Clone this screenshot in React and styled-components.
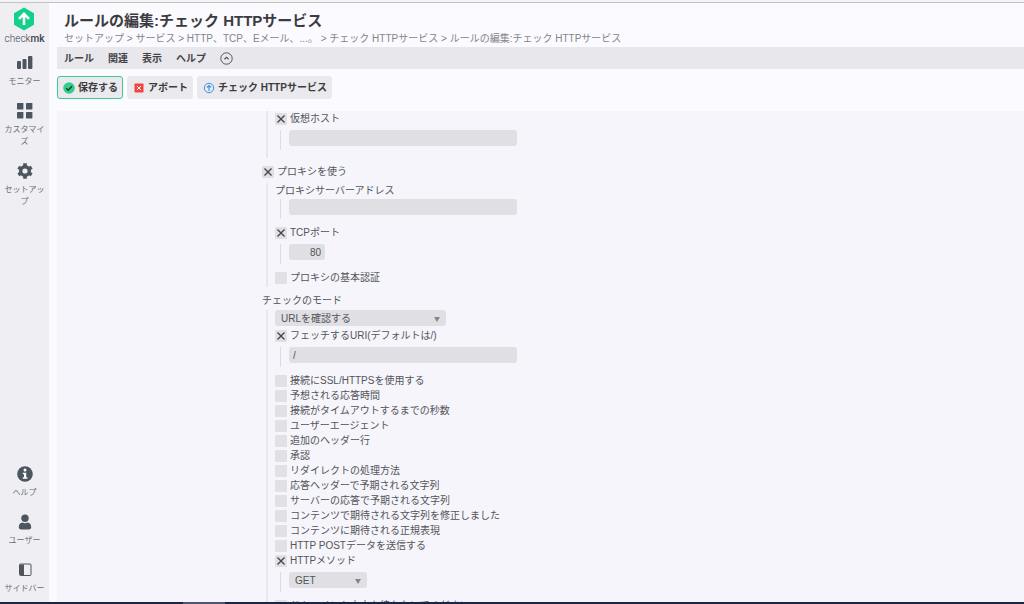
import React from "react";
import styled, { createGlobalStyle } from "styled-components";

const GlobalStyle = createGlobalStyle`
  *, *::before, *::after { box-sizing: border-box; }
  body {
    margin: 0;
    background: #fafaff;
    color: #545458;
    font: 10px/15px "Liberation Sans", "Noto Sans CJK JP", sans-serif;
  }
  button, input, select { font: inherit; color: inherit; }
`;

const Page = styled.div`
  height: 100vh;
  display: flex;
  flex-direction: column;
  border-top: 2px solid #f4f4f4;
`;

const Body = styled.div`
  flex: 1;
  min-height: 0;
  display: flex;
  border-top: 1px solid #c2c2c4;
`;

const BottomEdge = styled.div`
  flex: none;
  height: 2px;
  padding-left: 183px;
  background: #1b2647;
  &::before {
    content: "";
    display: block;
    width: 42px;
    height: 2px;
    background: #4b5570;
  }
`;

const Sidebar = styled.nav`
  flex: none;
  width: 49px;
  padding: 4px 2px 7px;
  display: flex;
  flex-direction: column;
  align-items: center;
  background: #eeeef3;
`;

const Brand = styled.a`
  display: flex;
  flex-direction: column;
  align-items: center;
  gap: 1px;
  margin-bottom: 9px;
  font: 300 10px/14px Roboto, sans-serif;
  color: #3c4248;
  text-decoration: none;
  svg { display: block; }
  b { font-weight: 500; }
`;

const NavGroup = styled.div`
  display: flex;
  flex-direction: column;
  align-items: center;
  gap: 15px;
  & + & { margin-top: auto; }
`;

const NavItem = styled.a`
  display: flex;
  flex-direction: column;
  align-items: center;
  gap: 5px;
  width: 42px;
  font-size: 8px;
  line-height: 12px;
  text-align: center;
  word-break: break-all;
  color: #6b6e75;
  text-decoration: none;
  svg { display: block; width: 16px; height: 16px; color: #4d565f; }
`;

const Main = styled.main`
  flex: 1;
  min-width: 0;
  padding-left: 8px;
  display: flex;
  flex-direction: column;
`;

const Header = styled.header`
  padding: 7px 7px 0;
`;

const Title = styled.h1`
  margin: 0;
  font-size: 15px;
  line-height: 21px;
  font-weight: 700;
  color: #3c3c40;
`;

const Breadcrumb = styled.div`
  height: 16px;
  line-height: 15px;
  white-space: nowrap;
  color: #85858a;
  a { color: inherit; text-decoration: none; }
`;

const MenuBar = styled.div`
  flex: none;
  height: 22px;
  padding: 0 7px;
  display: flex;
  align-items: center;
  gap: 14px;
  background: #e7e7ec;
`;

const MenuButton = styled.button`
  padding: 0;
  border: 0;
  background: none;
  font-weight: 700;
  line-height: 15px;
  color: #434347;
  svg { display: block; }
`;

const ActionBar = styled.div`
  flex: none;
  height: 42px;
  padding-top: 7px;
  display: flex;
  align-items: flex-start;
  gap: 4px;
`;

const ActionButton = styled.button`
  height: 23px;
  padding: 0 4px 0 5px;
  display: flex;
  align-items: center;
  gap: 3px;
  border: 1px solid ${(p) => (p.$primary ? "#3fc88f" : "#e9e9ee")};
  border-radius: 3px;
  background: #e9e9ee;
  font-weight: 700;
  color: #3c3c40;
  svg { display: block; width: 12px; height: 12px; }
`;

const Form = styled.form`
  flex: 1;
  min-height: 0;
  overflow: hidden;
  padding-left: 205px;
  background: #f5f5fb;
`;

const Group = styled.div`
  margin: 0 0 6px 4px;
  padding: 0 0 2px 7px;
  border-left: 2px solid #e7e7ec;
`;

const ProxyGroup = styled(Group)`
  margin-top: 4px;
`;

const ModeGroup = styled(Group)`
  margin-top: 2px;
`;

const Nested = styled.div`
  height: 20px;
  margin: ${(p) => (p.$tight ? 1 : 4)}px 0 6px 5px;
  padding-left: 8px;
  border-left: 1px solid #dcdce1;
`;

const Row = styled.label`
  display: flex;
  align-items: center;
  gap: 3px;
  height: 15px;
  white-space: nowrap;
`;

const Check = styled.input.attrs({ type: "checkbox" })`
  appearance: none;
  flex: none;
  width: 12px;
  height: 12px;
  margin: 1px 0 0;
  display: grid;
  place-items: center;
  border-radius: 1px;
  background: #e0e0e5;
  &:checked::before {
    content: "";
    width: 8px;
    height: 8px;
    background: #47474b;
    clip-path: polygon(0 12%, 12% 0, 50% 38%, 88% 0, 100% 12%, 62% 50%, 100% 88%, 88% 100%, 50% 62%, 12% 100%, 0 88%, 38% 50%);
  }
`;

const TextField = styled.input.attrs({ type: "text" })`
  display: block;
  width: ${(p) => (p.$short ? 36 : 228)}px;
  height: 16px;
  padding: 0 4px;
  border: 0;
  border-radius: 3px;
  background: #dfdfe4;
  text-align: ${(p) => (p.$short ? "right" : "left")};
`;

const SelectBox = styled.span`
  display: grid;
  align-items: center;
  width: ${(p) => (p.$short ? 78 : 171)}px;
  height: 16px;
  margin-bottom: 2px;
  select, svg { grid-area: 1 / 1; }
  select {
    appearance: none;
    width: 100%;
    height: 16px;
    padding: 0 6px;
    border: 0;
    border-radius: 3px;
    background: #dfdfe4;
    line-height: 15px;
  }
  svg { justify-self: end; margin: 3px 6px 0 0; pointer-events: none; }
`;

function Select({ id, label, short, options }) {
  return (
    <SelectBox $short={short}>
      <select id={id} aria-label={label} defaultValue={options[0]}>
        {options.map((o) => <option key={o}>{o}</option>)}
      </select>
      <svg width="6" height="5" viewBox="0 0 6 5"><path d="M0 0h6L3 5z" fill="#85858a" /></svg>
    </SelectBox>
  );
}

function Option({ children, checked }) {
  return <Row><Check defaultChecked={checked} />{children}</Row>;
}

const LogoIcon = () => (
  <svg width="20" height="24" viewBox="0 0 20 24">
    <path d="M10 .5 20 6.3v11.4L10 23.5 0 17.7V6.3z" fill="#15d08a" />
    <path d="M10 18V7.2M5 11.8l5-5 5 5" fill="none" stroke="#fff" strokeWidth="2.6" />
  </svg>
);
const MonitorIcon = () => (
  <svg viewBox="0 0 16 16" fill="currentColor">
    <rect x="0" y="6" width="4" height="8" rx="1" /><rect x="5.5" y="4" width="4" height="10" rx="1" /><rect x="11" y="1" width="4.4" height="13" rx="1" />
  </svg>
);
const CustomizeIcon = () => (
  <svg viewBox="0 0 16 16" fill="currentColor">
    <rect x="0" y="0" width="6.4" height="6.4" rx=".6" /><rect x="9" y="0" width="6.4" height="6.4" rx=".6" /><rect x="0" y="9" width="6.4" height="6.4" rx=".6" /><rect x="9" y="9" width="6.4" height="6.4" rx=".6" />
  </svg>
);
const SetupIcon = () => (
  <svg viewBox="0 0 16 16">
    <circle cx="8" cy="8" r="4.3" fill="none" stroke="currentColor" strokeWidth="3.4" />
    <g stroke="currentColor" strokeWidth="3.6">
      <path d="M8 .3v3M8 12.7v3M1.3 4.2l2.6 1.5M12.1 10.3l2.6 1.5M1.3 11.8l2.6-1.5M12.1 5.7l2.6-1.5" />
    </g>
  </svg>
);
const HelpIcon = () => (
  <svg viewBox="0 0 16 16">
    <circle cx="8" cy="8" r="7.8" fill="currentColor" />
    <circle cx="8" cy="4" r="1.5" fill="#fff" />
    <path d="M5.8 6.7h3.4v4.6h1.2v1.5H5.8v-1.5H7V8.2H5.8z" fill="#fff" />
  </svg>
);
const UserIcon = () => (
  <svg viewBox="0 0 16 16" fill="currentColor">
    <circle cx="8" cy="4.2" r="3.7" />
    <path d="M1.8 13.2c0-3 1.6-4.4 3.6-4.6 1.6 1 3.6 1 5.2 0 2 .2 3.6 1.6 3.6 4.6 0 1.4-.9 2.2-2.2 2.2H4c-1.3 0-2.2-.8-2.2-2.2z" />
  </svg>
);
const SidebarIcon = () => (
  <svg viewBox="0 0 16 16">
    <rect x="2.5" y="2" width="11.5" height="11.5" rx="1" fill="none" stroke="currentColor" />
    <path d="M3 2.5h4v10.5H3z" fill="currentColor" />
  </svg>
);
const CollapseIcon = () => (
  <svg width="13" height="13" viewBox="0 0 13 13" fill="none" stroke="#55555a">
    <circle cx="6.5" cy="6.5" r="5.7" /><path d="M4.4 7.3l2.1-2 2.1 2" strokeWidth="1.2" />
  </svg>
);
const SaveIcon = () => (
  <svg viewBox="0 0 12 12">
    <circle cx="6" cy="6" r="5.8" fill="#2fd08c" /><path d="M3.2 6.3l2 2 3.8-4" fill="none" stroke="#20382f" strokeWidth="1.5" />
  </svg>
);
const AbortIcon = () => (
  <svg viewBox="0 0 12 12">
    <rect x="1.5" y="1.5" width="9" height="9" rx=".8" fill="#f0443e" /><path d="M4 4l4 4M8 4L4 8" stroke="#fff" />
  </svg>
);
const CheckUpIcon = () => (
  <svg viewBox="0 0 12 12" fill="none" stroke="#3b93ea">
    <circle cx="6" cy="6" r="4.7" /><path d="M6 9V3.6M4 5.5l2-2 2 2" strokeWidth="1.1" />
  </svg>
);

const crumbs = ["セットアップ", "サービス", "HTTP、TCP、Eメール、...。", "チェック HTTPサービス", "ルールの編集:チェック HTTPサービス"];

const modeOptions = [
  "接続にSSL/HTTPSを使用する",
  "予想される応答時間",
  "接続がタイムアウトするまでの秒数",
  "ユーザーエージェント",
  "追加のヘッダー行",
  "承認",
  "リダイレクトの処理方法",
  "応答ヘッダーで予期される文字列",
  "サーバーの応答で予期される文字列",
  "コンテンツで期待される文字列を修正しました",
  "コンテンツに期待される正規表現",
  "HTTP POSTデータを送信する",
];

export default function App() {
  return (
    <Page>
      <GlobalStyle />
      <Body>
        <Sidebar>
          <Brand href="#"><LogoIcon /><span>check<b>mk</b></span></Brand>
          <NavGroup>
            <NavItem href="#"><MonitorIcon />モニター</NavItem>
            <NavItem href="#"><CustomizeIcon />カスタマイズ</NavItem>
            <NavItem href="#"><SetupIcon />セットアップ</NavItem>
          </NavGroup>
          <NavGroup>
            <NavItem href="#"><HelpIcon />ヘルプ</NavItem>
            <NavItem href="#"><UserIcon />ユーザー</NavItem>
            <NavItem href="#"><SidebarIcon />サイドバー</NavItem>
          </NavGroup>
        </Sidebar>
        <Main>
          <Header>
            <Title>ルールの編集:チェック HTTPサービス</Title>
            <Breadcrumb>
              {crumbs.map((c, i) => (
                <React.Fragment key={c}>{i > 0 && " > "}<a href="#">{c}</a></React.Fragment>
              ))}
            </Breadcrumb>
          </Header>
          <MenuBar>
            <MenuButton>ルール</MenuButton>
            <MenuButton>関連</MenuButton>
            <MenuButton>表示</MenuButton>
            <MenuButton>ヘルプ</MenuButton>
            <MenuButton aria-label="折りたたむ"><CollapseIcon /></MenuButton>
          </MenuBar>
          <ActionBar>
            <ActionButton $primary><SaveIcon />保存する</ActionButton>
            <ActionButton><AbortIcon />アボート</ActionButton>
            <ActionButton><CheckUpIcon />チェック HTTPサービス</ActionButton>
          </ActionBar>
          <Form>
            <Group>
              <Option checked>仮想ホスト</Option>
              <Nested><TextField aria-label="仮想ホスト" /></Nested>
            </Group>
            <Option checked>プロキシを使う</Option>
            <ProxyGroup>
              <Row htmlFor="proxy-address">プロキシサーバーアドレス</Row>
              <Nested $tight><TextField id="proxy-address" /></Nested>
              <Option checked>TCPポート</Option>
              <Nested><TextField $short aria-label="TCPポート" defaultValue="80" /></Nested>
              <Option>プロキシの基本認証</Option>
            </ProxyGroup>
            <Row htmlFor="check-mode">チェックのモード</Row>
            <ModeGroup>
              <Select id="check-mode" options={["URLを確認する"]} />
              <Option checked>フェッチするURI(デフォルトは/)</Option>
              <Nested><TextField aria-label="フェッチするURI" defaultValue="/" /></Nested>
              {modeOptions.map((o) => <Option key={o}>{o}</Option>)}
              <Option checked>HTTPメソッド</Option>
              <Nested><Select short label="HTTPメソッド" options={["GET"]} /></Nested>
              <Option>ドキュメント本文を待たないでください</Option>
            </ModeGroup>
          </Form>
        </Main>
      </Body>
      <BottomEdge />
    </Page>
  );
}
